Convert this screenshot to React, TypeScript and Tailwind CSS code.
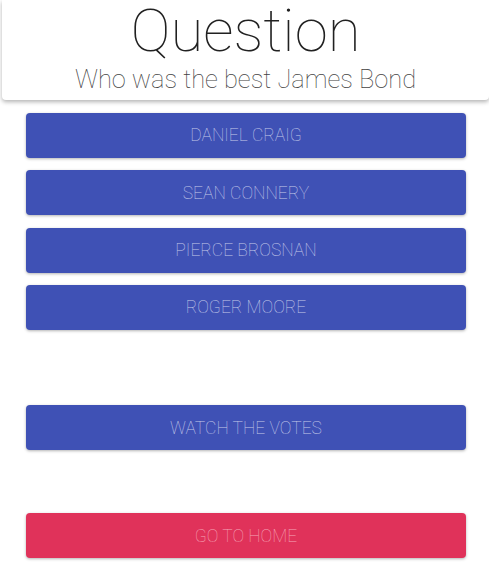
import React from "react";

const answers = ["DANIEL CRAIG", "SEAN CONNERY", "PIERCE BROSNAN", "ROGER MOORE"];

const btn = "h-[45px] w-[440px] rounded-[4px] text-[17.5px] font-thin shadow-[0_1px_3px_rgba(0,0,0,0.3)]";

export default function App() {
  return (
    <div className="min-h-[564px] w-[489px] overflow-hidden bg-white" style={{ fontFamily: "Roboto, 'Liberation Sans', sans-serif" }}>
      <div className="ml-[2px] flex h-[100px] flex-col items-center rounded-b-[4px] bg-white shadow-[0_2px_4px_rgba(0,0,0,0.3)]">
        <div className="text-[60px] font-thin leading-[62px] text-[#212121]">Question</div>
        <div className="mt-[2px] text-[25.4px] font-thin leading-[30px] text-[#424242]">Who was the best James Bond</div>
      </div>
      <div className="ml-[26px] mt-[13px] flex flex-col gap-[12.3px]">
        {answers.map((a) => (
          <button key={a} className={`${btn} bg-[#3f51b5] text-[#c5cae9]`}>
            {a}
          </button>
        ))}
      </div>
      <div className="ml-[26px] mt-[75.5px]">
        <button className={`${btn} bg-[#3f51b5] text-[#c5cae9]`}>WATCH THE VOTES</button>
      </div>
      <div className="ml-[26px] mt-[63px]">
        <button className={`${btn} bg-[#e0325a] text-[#f5a3b6]`}>GO TO HOME</button>
      </div>
    </div>
  );
}
